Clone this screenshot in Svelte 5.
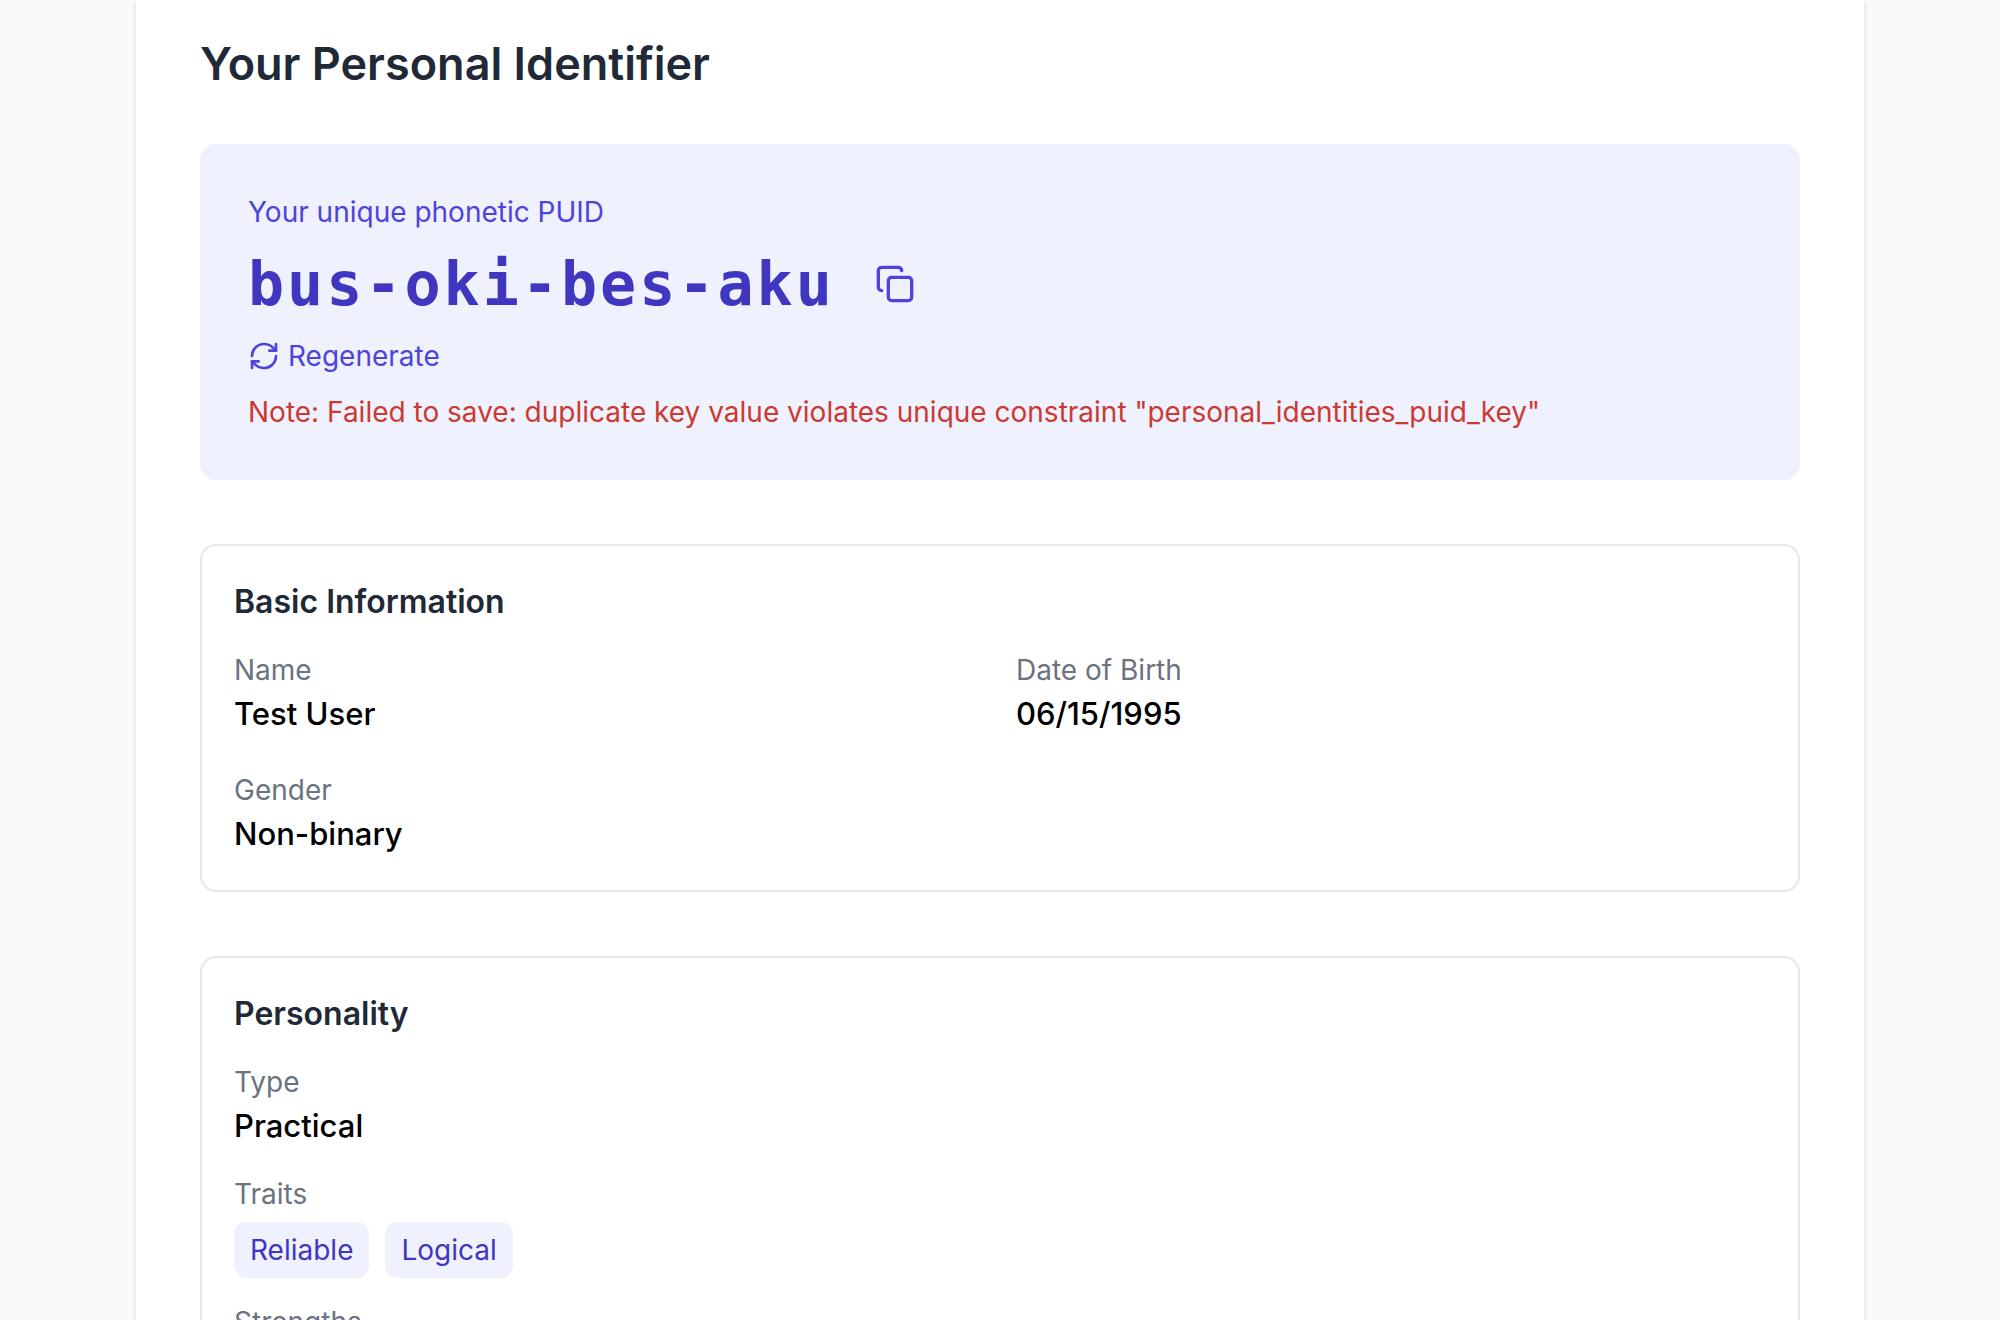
<script lang="ts">
  const puid = 'bus-oki-bes-aku';
  const basics = [
    { label: 'Name', value: 'Test User' },
    { label: 'Date of Birth', value: '06/15/1995' },
    { label: 'Gender', value: 'Non-binary' }
  ];
  const traits = ['Reliable', 'Logical'];

  function copy() {
    navigator.clipboard?.writeText(puid);
  }
</script>

<div class="page">
  <main class="sheet">
    <h1>Your Personal Identifier</h1>

    <section class="puid">
      <p class="puid-label">Your unique phonetic PUID</p>
      <div class="puid-row">
        <span class="puid-value">{puid}</span>
        <button class="copy" type="button" aria-label="Copy PUID" onclick={copy}>
          <svg viewBox="0 0 24 24" aria-hidden="true">
            <rect x="8" y="8" width="14" height="14" rx="2" ry="2" />
            <path d="M4 16c-1.1 0-2-.9-2-2V4c0-1.1.9-2 2-2h10c1.1 0 2 .9 2 2" />
          </svg>
        </button>
      </div>
      <button class="regenerate" type="button">
        <svg viewBox="0 0 24 24" aria-hidden="true">
          <path d="M3 12a9 9 0 0 1 9-9 9.75 9.75 0 0 1 6.74 2.74L21 8" />
          <path d="M21 3v5h-5" />
          <path d="M21 12a9 9 0 0 1-9 9 9.75 9.75 0 0 1-6.74-2.74L3 16" />
          <path d="M8 16H3v5" />
        </svg>
        Regenerate
      </button>
      <p class="note">
        Note: Failed to save: duplicate key value violates unique constraint "personal_identities_puid_key"
      </p>
    </section>

    <section class="card">
      <h2>Basic Information</h2>
      <dl class="grid">
        {#each basics as item}
          <div>
            <dt>{item.label}</dt>
            <dd>{item.value}</dd>
          </div>
        {/each}
      </dl>
    </section>

    <section class="card">
      <h2>Personality</h2>
      <dl class="stack">
        <div>
          <dt>Type</dt>
          <dd>Practical</dd>
        </div>
        <div>
          <dt>Traits</dt>
          <dd class="tags">
            {#each traits as trait}
              <span class="tag">{trait}</span>
            {/each}
          </dd>
        </div>
        <div>
          <dt>Strengths</dt>
        </div>
      </dl>
    </section>
  </main>
</div>

<style>
  :global(body) {
    margin: 0;
    background: #f8fafc;
  }

  .page {
    box-sizing: border-box;
    height: 100vh;
    overflow: hidden;
    padding: 0 32px;
    background: #f8fafc;
    color: #000;
    font-family: Inter, 'Liberation Sans', sans-serif;
    font-size: 32px;
    line-height: 48px;
  }

  .sheet {
    box-sizing: border-box;
    max-width: 1728px;
    min-height: 100%;
    margin: 0 auto;
    padding: 32px 64px 64px;
    background: #fff;
    box-shadow: 0 2px 6px rgba(0, 0, 0, 0.1), 0 2px 4px rgba(0, 0, 0, 0.04);
  }

  h1,
  h2,
  p,
  dl,
  dd {
    margin: 0;
  }

  h1 {
    margin-bottom: 48px;
    color: #1f2937;
    font-size: 45px;
    font-weight: 600;
    line-height: 64px;
  }

  h2 {
    margin-bottom: 24px;
    color: #1f2937;
    font-size: 32px;
    font-weight: 600;
    line-height: 48px;
  }

  button {
    border: 0;
    background: none;
    color: inherit;
    font: inherit;
    cursor: pointer;
  }

  svg {
    display: block;
    fill: none;
    stroke: currentColor;
    stroke-width: 2;
    stroke-linecap: round;
    stroke-linejoin: round;
  }

  .puid {
    padding: 48px;
    border-radius: 16px;
    background: #eff1fe;
    color: #4d44dc;
    font-size: 28px;
    line-height: 40px;
  }

  .puid-label {
    margin-bottom: 16px;
  }

  .puid-row {
    display: flex;
    align-items: center;
    gap: 24px;
  }

  .puid-value {
    color: #4036c0;
    font-family: 'DejaVu Sans Mono', monospace;
    font-size: 60px;
    font-weight: 700;
    line-height: 72px;
    letter-spacing: 3px;
  }

  .copy {
    padding: 16px;
  }

  .copy svg {
    width: 40px;
    height: 40px;
  }

  .regenerate {
    display: flex;
    align-items: center;
    gap: 8px;
    margin: 16px 0;
    padding: 0;
  }

  .regenerate svg {
    width: 32px;
    height: 32px;
  }

  .note {
    color: #cb3a31;
  }

  .card {
    margin-top: 64px;
    padding: 32px;
    border: 2px solid #e5e7eb;
    border-radius: 16px;
  }

  .grid {
    display: grid;
    grid-template-columns: 1fr 1fr;
    gap: 32px;
  }

  .stack {
    display: grid;
    gap: 24px;
  }

  dt {
    color: #6b7280;
    font-size: 28px;
    line-height: 40px;
  }

  dd {
    font-size: 31px;
    font-weight: 500;
  }

  .tags {
    display: flex;
    flex-wrap: wrap;
    gap: 16px;
    margin-top: 8px;
  }

  .tag {
    padding: 8px 16px;
    border-radius: 12px;
    background: #eff1fe;
    color: #4036c0;
    font-size: 28px;
    font-weight: 400;
    line-height: 40px;
  }
</style>
